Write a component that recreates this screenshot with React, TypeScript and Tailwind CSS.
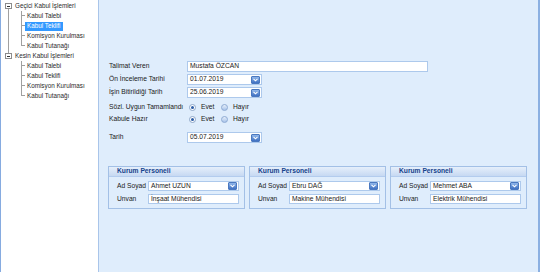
import React from 'react'

interface TreeGroupProps {
  title: string
  items: string[]
  first?: boolean
  selected?: number
}

function Chevron() {
  return (
    <svg width="5" height="4" viewBox="0 0 5 4">
      <path d="M0.5 0.8 L2.5 2.8 L4.5 0.8" fill="none" stroke="white" strokeWidth="1.1" />
    </svg>
  )
}

function DropButton() {
  return (
    <div className="ml-auto mr-[1px] flex h-[8px] w-[9px] items-center justify-center rounded-[1px] border border-[#4a78bf] bg-gradient-to-b from-[#8fb6ea] to-[#3f70c2]">
      <Chevron />
    </div>
  )
}

function TreeGroup({ title, items, first, selected }: TreeGroupProps) {
  return (
    <div>
      {/* root row */}
      <div className="flex h-[10px] items-center">
        <div className="flex h-[10px] w-[11px] shrink-0 flex-col">
          <div className={`ml-[5px] h-[2px] ${first ? '' : 'border-l border-[#a0a0a0]'}`}></div>
          <div className="ml-[2px] flex h-[6px] w-[7px] items-center justify-center border border-[#8c8c8c] bg-white">
            <div className="h-px w-[3px] bg-[#333]"></div>
          </div>
          <div className={`ml-[5px] h-[2px] ${first ? 'border-l border-[#a0a0a0]' : ''}`}></div>
        </div>
        <span className="pl-[1px] text-[#2a2a2a]">{title}</span>
      </div>
      {items.map((item, i) => {
        const last = i === items.length - 1
        return (
          <div key={i} className="flex h-[10px] items-center">
            <div className="h-[10px] w-[11px] shrink-0">
              {first && <div className="ml-[5px] h-full border-l border-[#a0a0a0]"></div>}
            </div>
            <div className="flex h-[10px] w-[11px] shrink-0 flex-col">
              <div className="ml-[7px] h-[5px] w-[4px] border-b border-l border-[#a0a0a0]"></div>
              <div className={`ml-[7px] h-[5px] ${last ? '' : 'border-l border-[#a0a0a0]'}`}></div>
            </div>
            <span
              className={`flex h-[9px] items-center px-[2px] ${
                selected === i ? 'bg-[#3399ff] text-white' : 'text-[#2a2a2a]'
              }`}
            >
              {item}
            </span>
          </div>
        )
      })}
    </div>
  )
}

function Field({ label, value, width, combo }: { label: string; value: string; width: string; combo?: boolean }) {
  return (
    <div className="flex h-[11px] items-center">
      <div className="w-[78px] shrink-0">{label}</div>
      <div className={`flex h-[11px] ${width} items-center border border-[#adc9ec] bg-white pl-[2px]`}>
        <span>{value}</span>
        {combo && <DropButton />}
      </div>
    </div>
  )
}

function Radio({ checked }: { checked?: boolean }) {
  return checked ? (
    <div className="flex h-[7px] w-[7px] items-center justify-center rounded-full border border-[#8da6c8] bg-white">
      <div className="h-[3px] w-[3px] rounded-full bg-[#2a5ca6]"></div>
    </div>
  ) : (
    <div className="h-[7px] w-[7px] rounded-full border border-[#8eaad3] bg-gradient-to-b from-[#e6effa] to-[#a9c4ea]"></div>
  )
}

function RadioRow({ label }: { label: string }) {
  return (
    <div className="flex h-[10px] items-center">
      <div className="w-[78px] shrink-0">{label}</div>
      <div className="ml-[2px] flex w-[32px] items-center gap-[5px]">
        <Radio checked />
        <span>Evet</span>
      </div>
      <div className="flex items-center gap-[5px]">
        <Radio />
        <span>Hayır</span>
      </div>
    </div>
  )
}

function PersonelPanel({ name, title }: { name: string; title: string }) {
  return (
    <div className="h-[43px] w-[137px] border border-[#a3c0e6]">
      <div className="flex h-[10px] items-center border-b border-[#b3ccee] bg-gradient-to-b from-[#e6effb] to-[#c6d9f2] pl-[8px] font-bold text-[#15428b]">
        Kurum Personeli
      </div>
      <div className="mt-[4px] flex h-[10px] items-center">
        <div className="w-[39px] shrink-0 pl-[8px]">Ad Soyad</div>
        <div className="flex h-[10px] w-[91px] items-center border border-[#adc9ec] bg-white pl-[2px]">
          <span>{name}</span>
          <DropButton />
        </div>
      </div>
      <div className="mt-[3px] flex h-[10px] items-center">
        <div className="w-[39px] shrink-0 pl-[8px]">Unvan</div>
        <div className="flex h-[10px] w-[91px] items-center border border-[#adc9ec] bg-white pl-[2px]">
          <span>{title}</span>
        </div>
      </div>
    </div>
  )
}

const kabulItems = ['Kabul Talebi', 'Kabul Teklifi', 'Komisyon Kurulması', 'Kabul Tutanağı']

export default function App() {
  return (
    <div className="flex h-[272px] w-[540px] overflow-hidden font-['Liberation_Sans',Arial,sans-serif] leading-none text-[#1a1a1a]">
      {/* Tree */}
      <div className="w-[99px] shrink-0 border-l border-r border-l-[#86abe0] border-r-[#a9c5ea] bg-white pl-[2px] pt-[1px] text-[6.3px]">
        <TreeGroup title="Geçici Kabul İşlemleri" items={kabulItems} first selected={1} />
        <TreeGroup title="Kesin Kabul İşlemleri" items={kabulItems} />
      </div>

      {/* Form */}
      <div className="flex-1 border-r-2 border-[#8bb0e2] bg-[#dfedfc] pl-[10px] pt-[61px] text-[6.7px]">
        <Field label="Talimat Veren" value="Mustafa ÖZCAN" width="w-[241px]" />
        <div className="mt-[2px]">
          <Field label="Ön İnceleme Tarihi" value="01.07.2019" width="w-[75px]" combo />
        </div>
        <div className="mt-[2px]">
          <Field label="İşin Bitirildiği Tarih" value="25.06.2019" width="w-[75px]" combo />
        </div>
        <div className="mt-[4px]">
          <RadioRow label="Sözl. Uygun Tamamlandı" />
        </div>
        <div className="mt-[2px]">
          <RadioRow label="Kabule Hazır" />
        </div>
        <div className="mt-[8px]">
          <Field label="Tarih" value="05.07.2019" width="w-[75px]" combo />
        </div>

        <div className="-ml-[1px] mt-[23px] flex gap-[4px]">
          <PersonelPanel name="Ahmet UZUN" title="İnşaat Mühendisi" />
          <PersonelPanel name="Ebru DAĞ" title="Makine Mühendisi" />
          <PersonelPanel name="Mehmet ABA" title="Elektrik Mühendisi" />
        </div>
      </div>
    </div>
  )
}
